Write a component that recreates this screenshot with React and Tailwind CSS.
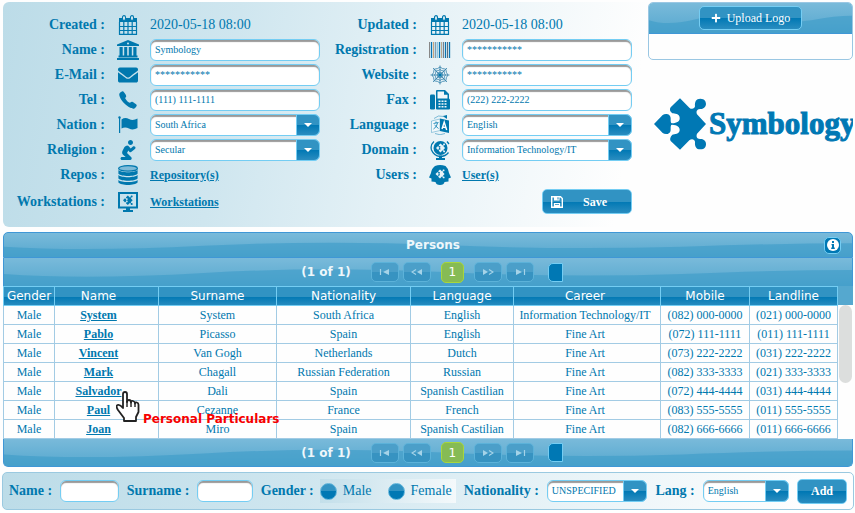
import React from "react";
import { FaEnvelope, FaPray, FaPlus } from "react-icons/fa";
import { IoCall } from "react-icons/io5";

const MARK =
  "M78 0L106 28C112 34 122 32 123 24C122 10 126 1 139 1C152 1 156 10 156 17C155 28 146 33 138 32C128 33 126 40 129 48L156 77L129 106C126 114 128 121 138 122C146 121 156 126 156 137C156 146 152 153 139 153C126 153 122 144 123 130C122 122 112 120 106 126L78 154L50 128C47 124 48 115 55 109C62 108 76 108 77 96C78 86 70 80 54 79C50 79 50 84 50 94C50 108 34 110 26 104L0 77L26 50C34 44 50 46 50 60C50 70 50 75 54 75C70 74 78 68 77 58C76 46 62 46 55 45C47 40 46 32 50 27Z";

const Svg = ({ children, box = "0 0 20 20", size = "size-5" }) => (
  <svg viewBox={box} className={size} fill="currentColor" aria-hidden="true">
    {children}
  </svg>
);

const Calendar = () => (
  <Svg>
    <path d="M1 3h18v4H1z" />
    <rect x="4.500" y="0.600" width="3" height="4.800" rx="1.500" fill="#d5e9f1" stroke="currentColor" strokeWidth="1.100" />
    <rect x="12.500" y="0.600" width="3" height="4.800" rx="1.500" fill="#d5e9f1" stroke="currentColor" strokeWidth="1.100" />
    <path d="M1.500 7v12.300h17V7M1 11.500h18M1 15.500h18M5.800 7v12M10 7v12M14.200 7v12" fill="none" stroke="currentColor" strokeWidth="1.200" />
  </Svg>
);

const Bank = () => (
  <Svg box="0 0 22 20" size="h-5 w-[22px]">
    <path d="M11 0L22 4.500V6H0V4.500zM2.500 7h3.200v8.500H2.500zM7.200 7h3v8.500h-3zM11.800 7h3v8.500h-3zM16.300 7h3.200v8.500h-3.200zM1.500 15.500h19V17.500H1.500zM0 18h22v2H0z" />
    <circle cx="11" cy="3.500" r="1" fill="#cfe6ef" />
  </Svg>
);

const Flag = () => (
  <Svg>
    <circle cx="1.500" cy="2.500" r="1.200" />
    <path d="M1 3h1.200v15H1zM3.500 4.500Q7 2 11 4Q15 6 19.500 3.500v9.500Q15 15.500 11 13.500Q7 11.500 3.500 13.500z" />
  </Svg>
);

const Fax = () => (
  <Svg>
    <path d="M1.200 4.500h2.600Q5 4.500 5 5.700v12.600Q5 19.500 3.800 19.500H1.200Q0 19.500 0 18.300V5.700Q0 4.500 1.200 4.500z" />
    <path d="M6 1Q6 0 7 0h8l4 4v4.500q1 .5 1 1.500v8.500q0 1-1 1H7q-1 0-1-1z" />
    <path d="M7.500 1.500h6.500v3.300h3.500V8.500h-10z" fill="#f0f7fa" />
    <path d="M8.500 10.500h2v1.500h-2zM11.500 10.500h2v1.500h-2zM14.500 10.500h2v1.500h-2zM8.500 13.200h2v1.500h-2zM11.500 13.200h2v1.500h-2zM14.500 13.200h2v1.500h-2zM8.500 16h2v1.500h-2zM11.500 16h2v1.500h-2zM14.500 16h2v1.500h-2z" fill="#f0f7fa" />
  </Svg>
);

const Database = () => (
  <Svg>
    <ellipse cx="10" cy="3.400" rx="9.400" ry="2.700" fill="#7fbbd8" stroke="currentColor" strokeWidth="1.200" />
    <path d="M.4 5C3 7.900 17 7.900 19.600 5V8.800C17 11.800 3 11.800 .4 8.800z" />
    <path d="M.4 10C3 12.900 17 12.900 19.600 10v3.600C17 16.600 3 16.600 .4 13.600z" />
    <path d="M.4 15C3 17.800 17 17.800 19.600 15V17.500C17 20.800 3 20.800 .4 17.500z" />
  </Svg>
);

const Workstation = () => (
  <Svg>
    <rect x="1" y="1" width="18" height="14.500" fill="none" stroke="currentColor" strokeWidth="2" />
    <path d="M8 16h4v2h3v2H5v-2h3z" />
    <g transform="translate(5 3.500) scale(.062)"><path d={MARK} /></g>
  </Svg>
);

const BARS = [
  [0, "#888"], [2, "#0a73b0"], [4, "#c9a27a"], [6, "#7d9db5"], [8, "#8fc7df"],
  [10, "#0a73b0"], [12, "#b9a78e"], [14, "#777f8a"], [16, "#0a73b0"], [18, "#5b6f80"], [20, "#0a73b0"],
];
const Barcode = () => (
  <Svg box="0 0 22 16" size="h-4 w-[22px]">
    <rect width="22" height="16" fill="#9fc9de" fillOpacity=".5" />
    {BARS.map(([x, c]) => (
      <rect key={x} x={x} y="0" width="1" height="16" fill={c} />
    ))}
  </Svg>
);

const Web = () => (
  <Svg>
    <g fill="none" stroke="#2f7ea8" strokeWidth="0.800">
      <path d="M10 .5v19M.5 10h19M3 3l14 14M17 3l-14 14" />
      <path d="M10 7Q9 8 7.800 7.800Q8 9 7 10Q8 11 7.800 12.200Q9 12 10 13Q11 12 12.200 12.200Q12 11 13 10Q12 9 12.200 7.800Q11 8 10 7z" />
      <path d="M10 4.500Q8.500 6 6 6Q6 8.500 4.500 10Q6 11.500 6 14Q8.500 14 10 15.500Q11.500 14 14 14Q14 11.500 15.500 10Q14 8.500 14 6Q11.500 6 10 4.500z" />
      <path d="M10 2Q8 4 4.200 4.200Q4 8 2 10Q4 12 4.200 15.800Q8 16 10 18Q12 16 15.800 15.800Q16 12 18 10Q16 8 15.800 4.200Q12 4 10 2z" />
    </g>
    <circle cx="10" cy="10" r="1.800" />
  </Svg>
);

const Translate = () => (
  <Svg>
    <path d="M10 3.500L19 5.500V18l-9-2z" />
    <path d="M10 4L1.500 6v11.500L10 15.500z" fill="#f2f8fb" stroke="currentColor" strokeWidth="0.700" strokeOpacity=".5" />
    <path d="M3.500 8.500l5-1M6 6.500v1.500M7.500 8Q7 12 3.500 14M4.500 10l4 3.500" fill="none" stroke="currentColor" strokeWidth="0.800" />
    <path d="M12 14l2.200-7 2.500 8M12.800 12l3 .6" fill="none" stroke="#fff" strokeWidth="1.400" />
    <path d="M4 3.500Q8-.5 14 1.500l2 1.500M5 18.500Q10 21 15 18.500" fill="none" stroke="currentColor" strokeWidth="0.800" strokeOpacity=".6" />
    <path d="M13 1l4 3V0z" />
  </Svg>
);

const Globe = () => (
  <Svg>
    <circle cx="10.500" cy="8" r="7" />
    <path d="M4 1.500Q0 5 1.500 10Q4 16 10 16.500Q15.500 16.500 18.500 12.500M17 1.500l2 2.500" fill="none" stroke="currentColor" strokeWidth="1.300" />
    <path d="M9 15.500h3V18h3v2H6v-2h3z" />
    <g transform="translate(6 3.500) scale(.058)" fill="#e8f3f8"><path d={MARK} /></g>
  </Svg>
);

const Head = () => (
  <Svg box="0 0 22 20" size="h-5 w-[22px]">
    <path d="M6 1Q11-.8 16.500 1Q19.500 3.500 20 8L22 12.500L19.500 13.500V16.500L15.500 17Q15 20 11 20Q7 20 6.500 17L2.500 16.500V13.500L0 12.500L2 8Q2.500 3.500 6 1z" />
    <g transform="translate(6.500 4.500) scale(.058)" fill="#e8f3f8"><path d={MARK} /></g>
  </Svg>
);

const Floppy = () => (
  <svg viewBox="0 0 12 12" className="size-3" aria-hidden="true">
    <path d="M.7.700h8.800l1.800 1.800v8.800H.7z" fill="none" stroke="#fff" strokeWidth="1.400" />
    <path d="M3 .5h5.500v4H3zM2.800 7h6.400v4.500H2.800z" fill="#fff" />
    <path d="M6.500 1.300h1v2.200h-1zM4 8.300h4v.8H4z" fill="#1d84b9" />
  </svg>
);

const GLOSS = "bg-[linear-gradient(#3193c3_50%,#0078b4_50%,#2a8dc0)]";
const FIELD =
  "w-full h-[22px] rounded-md border border-[#74cdf3] bg-white text-[10px] text-[#0078ae] shadow-[inset_0_2px_1px_#999] outline-none";

function TextField({ id, value }) {
  return <input id={id} defaultValue={value} className={`${FIELD} block px-1`} />;
}

function SelectField({ id, value }) {
  return (
    <span className="relative block w-full">
      <select id={id} defaultValue={value} className={`${FIELD} block appearance-none pl-1 pr-6`}>
        <option>{value}</option>
      </select>
      <span className={`${GLOSS} pointer-events-none absolute inset-y-0 right-0 flex w-6 items-center justify-center rounded-r-md border border-[#74cdf3]`}>
        <span className="border-x-4 border-t-4 border-x-transparent border-t-white" />
      </span>
    </span>
  );
}

const ROWS = [
  ["Created", <Calendar />, "text", "2020-05-18 08:00"],
  ["Updated", <Calendar />, "text", "2020-05-18 08:00"],
  ["Name", <Bank />, "input", "Symbology"],
  ["Registration", <Barcode />, "input", "***********"],
  ["E-Mail", <FaEnvelope className="size-5" />, "input", "***********"],
  ["Website", <Web />, "input", "***********"],
  ["Tel", <IoCall className="size-5" />, "input", "(111) 111-1111"],
  ["Fax", <Fax />, "input", "(222) 222-2222"],
  ["Nation", <Flag />, "select", "South Africa"],
  ["Language", <Translate />, "select", "English"],
  ["Religion", <FaPray className="size-5" />, "select", "Secular"],
  ["Domain", <Globe />, "select", "Information Technology/IT"],
  ["Repos", <Database />, "link", "Repository(s)"],
  ["Users", <Head />, "link", "User(s)"],
  ["Workstations", <Workstation />, "link", "Workstations"],
];

function FormItem({ item }) {
  const [label, icon, kind, value] = item;
  const id = `field-${label.toLowerCase()}`;
  const isControl = kind === "input" || kind === "select";
  return (
    <>
      {isControl ? (
        <label htmlFor={id} className="text-right text-sm font-bold">{label} :</label>
      ) : (
        <span className="text-right text-sm font-bold">{label} :</span>
      )}
      <span className="flex justify-center">{icon}</span>
      {kind === "text" && <span className="text-sm">{value}</span>}
      {kind === "input" && <TextField id={id} value={value} />}
      {kind === "select" && <SelectField id={id} value={value} />}
      {kind === "link" && (
        <a href="#" className="justify-self-start text-xs font-bold underline">{value}</a>
      )}
    </>
  );
}

function WaveBar({ className = "", children }) {
  return (
    <div className={`relative bg-linear-to-b from-[#79bada] to-[#55a8cf] ${className}`}>
      <svg viewBox="0 0 850 28" preserveAspectRatio="none" className="absolute inset-0 h-full w-full" aria-hidden="true">
        <path d="M0 16Q80 22 200 15Q320 8 440 14Q560 20 680 16Q780 12 850 12V28H0z" fill="#3c9bc8" fillOpacity=".6" />
      </svg>
      <div className="relative flex h-full w-full items-center justify-center">{children}</div>
    </div>
  );
}

const PAGE_BTN =
  "flex h-5 w-7 items-center justify-center rounded-[5px] border border-[#5cb2d9] bg-[linear-gradient(#4b9fc9_50%,#3793c1_50%)] text-[#a5d3e8]";

const Arrow = ({ d, line }) => (
  <svg viewBox="0 0 12 6" className="h-[6px] w-3" fill="currentColor" aria-hidden="true">
    <path d={d} />
    <path d={line} fill="none" stroke="currentColor" strokeWidth="1.200" />
  </svg>
);

function Paginator({ className }) {
  return (
    <WaveBar className={className}>
      <div className="flex items-center pl-2">
        <span className="font-['DejaVu_Sans',sans-serif] text-xs font-bold text-[#eef7fb]">(1 of 1)</span>
        <button aria-label="First page" className={`${PAGE_BTN} ml-5`}><Arrow d="M10 0v6L4 3z" line="M1.500 0v6" /></button>
        <button aria-label="Previous page" className={`${PAGE_BTN} ml-1`}><Arrow d="M11 0v6L6 3z" line="M5 .5L1 3L5 5.500" /></button>
        <button className="ml-[10px] h-[21px] w-[23px] rounded-[5px] border border-[#a8d63c] bg-[#86bb55] font-['DejaVu_Sans',sans-serif] text-xs leading-none text-white">1</button>
        <button aria-label="Next page" className={`${PAGE_BTN} ml-[10px]`}><Arrow d="M1 0v6l5-3z" line="M7 .5L11 3L7 5.500" /></button>
        <button aria-label="Last page" className={`${PAGE_BTN} ml-1`}><Arrow d="M2 0v6l6-3z" line="M10.500 0v6" /></button>
        <select aria-label="Rows per page" className="ml-[14px] h-[19px] w-[15px] appearance-none rounded-l-[5px] border border-[#74cdf3] bg-[#0078b4]" />
      </div>
    </WaveBar>
  );
}

const HEADS = ["Gender", "Name", "Surname", "Nationality", "Language", "Career", "Mobile", "Landline"];
const PAD = { 1: "pr-4", 5: "pr-1" };
const PEOPLE = [
  ["Male", "System", "System", "South Africa", "English", "Information Technology/IT", "(082) 000-0000", "(021) 000-0000"],
  ["Male", "Pablo", "Picasso", "Spain", "English", "Fine Art", "(072) 111-1111", "(011) 111-1111"],
  ["Male", "Vincent", "Van Gogh", "Netherlands", "Dutch", "Fine Art", "(073) 222-2222", "(031) 222-2222"],
  ["Male", "Mark", "Chagall", "Russian Federation", "Russian", "Fine Art", "(082) 333-3333", "(021) 333-3333"],
  ["Male", "Salvador", "Dali", "Spain", "Spanish Castilian", "Fine Art", "(072) 444-4444", "(031) 444-4444"],
  ["Male", "Paul", "Cezanne", "France", "French", "Fine Art", "(083) 555-5555", "(011) 555-5555"],
  ["Male", "Joan", "Miro", "Spain", "Spanish Castilian", "Fine Art", "(082) 666-6666", "(011) 666-6666"],
];

function Pointer() {
  return (
    <>
      <svg viewBox="0 0 24 31" className="absolute left-[61px] top-[9px] z-10 h-[31px] w-6" aria-hidden="true">
        <path
          d="M8 30v-3L2 19Q-.5 15 1.500 14Q4 13 7 17V3Q7 1 9 1Q11 1 11 3v8q0-2 2-2t2 2.500q0-2 2-1.500t2 2.500q0-1.500 1.800-1T22.500 14v7L20 26v4z"
          fill="#fff" stroke="#222" strokeWidth="1.800" strokeLinejoin="round"
        />
        <path d="M11 10v6M15 11v5M19 12v4" stroke="#222" strokeWidth="1.400" />
      </svg>
      <span role="tooltip" className="absolute left-[88px] top-[29px] z-10 whitespace-nowrap font-['DejaVu_Sans',sans-serif] text-xs font-bold leading-4 text-[#f60000]">
        Personal Particulars
      </span>
    </>
  );
}

function PersonsTable() {
  return (
    <section className="mt-[5px] mr-[2px] ml-[3px]">
      <WaveBar className="h-[26px] overflow-hidden rounded-t-[5px] border border-[#3f97d6]">
        <h2 className="flex-1 pl-[10px] text-center font-['DejaVu_Sans',sans-serif] text-xs font-bold text-[#eef7fb]">Persons</h2>
        <button aria-label="Information" className="absolute right-[11px] flex size-[17px] items-center justify-center rounded-[5px] border border-[#74cdf3] bg-[#0078b4]">
          <svg viewBox="0 0 12 12" className="size-3" aria-hidden="true">
            <circle cx="6" cy="6" r="6" fill="#fff" />
            <path d="M5 2h2v2H5zM4.500 5H7v3.500h.8V10H4.200V8.500H5V6.200h-.5z" fill="#0078b4" />
          </svg>
        </button>
      </WaveBar>
      <Paginator className="h-7 border-x border-[#3f97d6]" />
      <div className="flex">
        <table className="w-full flex-1 table-fixed border-collapse text-center text-xs">
          <colgroup>
            <col className="w-[51px]" /><col className="w-[104px]" /><col className="w-[118px]" /><col className="w-[134px]" />
            <col className="w-[103px]" /><col className="w-[147px]" /><col className="w-[89px]" /><col className="w-[88px]" />
          </colgroup>
          <thead>
            <tr className={`${GLOSS} h-[19px]`}>
              {HEADS.map((h, i) => (
                <th key={h} className={`border border-[#74cdf3] p-0 font-['DejaVu_Sans',sans-serif] font-normal leading-[18px] text-white ${PAD[i] ?? ""}`}>{h}</th>
              ))}
            </tr>
          </thead>
          <tbody>
            {PEOPLE.map((p) => (
              <tr key={p[1]} className="h-[19px]">
                {p.map((v, i) => (
                  <td key={i} className={`relative whitespace-nowrap border border-[#a2cbe4] p-0 leading-[18px] ${PAD[i] ?? ""}`}>
                    {i === 1 ? <a href="#" className="font-bold underline">{v}</a> : v}
                    {i === 1 && v === "Salvador" && <Pointer />}
                  </td>
                ))}
              </tr>
            ))}
          </tbody>
        </table>
        <div className="w-4">
          <div className="h-[19px] bg-[#55a8cf]" />
          <div className="mx-px h-[78px] rounded-full bg-[#dcdedd]" />
        </div>
      </div>
      <Paginator className="h-7 overflow-hidden rounded-b-[5px] border-x border-b border-[#3f97d6]" />
    </section>
  );
}

const BTN = "rounded-[5px] border border-[#74cdf3] font-bold text-xs text-white";

export default function App() {
  return (
    <div className="bg-[#fefefe] pt-[2px] font-['Liberation_Serif',serif] text-[#0078ae]">
      <div className="flex pl-[3px] pr-[2px]">
        <form className="min-w-0 flex-1 rounded-l-md bg-[linear-gradient(100deg,#bcdce8,#cfe6ef_35%,#e4f1f6_60%,#fefefe_95%)] pt-[10px] pr-4 pb-[11px]">
          <div className="grid grid-cols-[102fr_45px_170fr_97fr_45px_170fr] grid-rows-[repeat(7,25px)_29px] items-center">
            {ROWS.map((r) => <FormItem key={r[0]} item={r} />)}
            <span className="col-span-3 flex justify-end">
              <button type="button" className={`${BTN} ${GLOSS} flex h-[25px] w-[90px] items-center pl-2`}>
                <Floppy />
                <span className="flex-1 pr-1 text-center">Save</span>
              </button>
            </span>
          </div>
        </form>
        <aside className="flex w-[205px] flex-col">
          <div className="rounded-[5px] border border-[#9ac7e3]">
            <WaveBar className="h-[31px] overflow-hidden rounded-t-[4px] border-b border-[#3f97d6]">
              <button className={`${GLOSS} flex h-6 w-[103px] items-center justify-center gap-[6px] rounded-[5px] border border-[#74cdf3] text-xs text-white`}>
                <FaPlus className="size-[10px]" />Upload Logo
              </button>
            </WaveBar>
            <div className="h-[25px]" />
          </div>
          <div className="mt-[38px] flex items-center overflow-hidden pl-[6px]">
            <svg viewBox="0 0 156 154" className="size-[52px] shrink-0" fill="#0078b4" aria-hidden="true"><path d={MARK} /></svg>
            <span className="ml-[3px] text-[31px] font-bold leading-[52px] text-[#0078b4] [-webkit-text-stroke:1px_#0078b4]">Symbology</span>
          </div>
        </aside>
      </div>

      <PersonsTable />

      <form className="mt-[5px] mr-px ml-[2px] flex h-[38px] items-center gap-2 rounded-[5px] border border-[#9ac9e0] bg-[linear-gradient(100deg,#bcdce8,#cfe6ef_35%,#e4f1f6_60%,#fefefe_95%)] px-[6px] text-sm">
        <label htmlFor="add-name" className="shrink-0 font-bold">Name :</label>
        <span className="min-w-0 flex-[57]"><TextField id="add-name" value="" /></span>
        <label htmlFor="add-surname" className="shrink-0 font-bold">Surname :</label>
        <span className="min-w-0 flex-[54]"><TextField id="add-surname" value="" /></span>
        <fieldset className="flex shrink-0 items-center gap-[6px]">
          <legend className="float-left font-bold">Gender :</legend>
          <div className="flex h-6 items-center gap-4 bg-linear-to-r from-[#c3dfea] to-[#f4f9fb] pr-1">
            {["Male", "Female"].map((g) => (
              <label key={g} className="flex items-center gap-[6px]">
                <input type="radio" name="gender" className="size-[17px] appearance-none rounded-full border border-[#5cb2d9] bg-[linear-gradient(#3193c3_50%,#0078b4_50%)]" />
                {g}
              </label>
            ))}
          </div>
        </fieldset>
        <label htmlFor="add-nationality" className="shrink-0 font-bold">Nationality :</label>
        <span className="min-w-0 flex-[98]"><SelectField id="add-nationality" value="UNSPECIFIED" /></span>
        <label htmlFor="add-lang" className="shrink-0 font-bold">Lang :</label>
        <span className="min-w-0 flex-[84]"><SelectField id="add-lang" value="English" /></span>
        <button type="button" className={`${BTN} ${GLOSS} h-[25px] w-[50px] shrink-0`}>Add</button>
      </form>
    </div>
  );
}
